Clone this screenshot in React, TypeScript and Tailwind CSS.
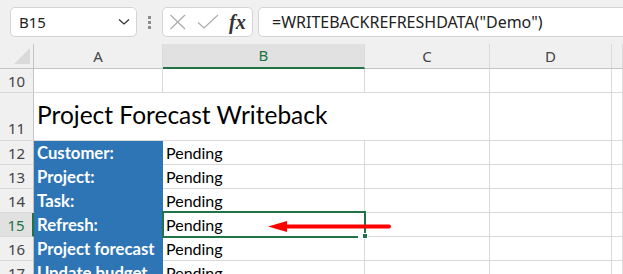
import React from "react";

const ui = "font-['Noto_Sans',sans-serif]";
const cell = "font-['Lato',sans-serif]";

function ColHeader({ label, selected }: { label: string; selected?: boolean }) {
  return (
    <div
      className={
        "flex items-center justify-center border-r border-[#dadada] text-[15px] " +
        ui +
        (selected
          ? " bg-[#e1e1e1] text-[#217346] border-b-2 border-b-[#217346]"
          : " bg-[#f0f0f0] text-[#444] border-b border-b-[#c4c4c4]")
      }
    >
      {label}
    </div>
  );
}

function RowHeader({ n, selected, bottom }: { n: number; selected?: boolean; bottom?: boolean }) {
  return (
    <div
      className={
        "flex justify-center border-b border-[#dadada] text-[15px] leading-[22px] " +
        ui +
        (bottom ? " items-end pb-[1px]" : " items-center") +
        (selected
          ? " bg-[#e1e1e1] text-[#217346] border-r-2 border-r-[#217346]"
          : " bg-[#f0f0f0] text-[#444] border-r border-r-[#c4c4c4]")
      }
    >
      {n}
    </div>
  );
}

function Empty() {
  return <div className="border-r border-b border-[#dadada] bg-white" />;
}

function Label({ text }: { text: string }) {
  return (
    <div
      className={
        "flex items-end pl-[3px] pb-[1px] bg-[#2e75b6] text-white font-bold text-[16.7px] leading-[20px] whitespace-nowrap overflow-hidden border-b border-[#2e75b6] " +
        cell
      }
    >
      {text}
    </div>
  );
}

function Value({ text }: { text: string }) {
  return (
    <div
      className={
        "flex items-end pl-[3px] pb-[1px] border-r border-b border-[#dadada] bg-white text-black text-[16px] leading-[20px] whitespace-nowrap " +
        cell
      }
    >
      {text}
    </div>
  );
}

export default function App() {
  const rows: [number, string][] = [
    [12, "Customer:"],
    [13, "Project:"],
    [14, "Task:"],
    [15, "Refresh:"],
    [16, "Project forecast"],
    [17, "Update budget"],
  ];
  return (
    <div className="relative w-[623px] h-[274px] overflow-hidden bg-white">
      {/* Toolbar */}
      <div className="flex items-start h-[44px] bg-[#f0f0f0] pt-[7px] pl-[10px]">
        <div
          className={
            "flex items-center justify-between w-[127px] h-[30px] rounded-[5px] border border-[#d4d4d4] bg-white pl-[8px] pr-[6px] text-[15px] text-[#222] " +
            ui
          }
        >
          <span>B15</span>
          <svg width="12" height="8" viewBox="0 0 12 8">
            <polyline points="1,1.5 6,6 11,1.5" fill="none" stroke="#333" strokeWidth="1.3" />
          </svg>
        </div>
        <div className="flex flex-col gap-[2px] ml-[11px] mt-[9px]">
          <div className="w-[3px] h-[3px] bg-[#8c8c8c]" />
          <div className="w-[3px] h-[3px] bg-[#8c8c8c]" />
          <div className="w-[3px] h-[3px] bg-[#8c8c8c]" />
        </div>
        <div className="flex items-center w-[91px] h-[30px] ml-[11px] rounded-[5px] border border-[#d4d4d4] bg-white pl-[6px]">
          <svg width="18" height="16" viewBox="0 0 18 16">
            <line x1="1.5" y1="1" x2="16" y2="15" stroke="#ababab" strokeWidth="1.2" />
            <line x1="16" y1="1" x2="1.5" y2="15" stroke="#ababab" strokeWidth="1.2" />
          </svg>
          <svg width="22" height="16" viewBox="0 0 22 16" className="ml-[10px]">
            <polyline points="1,8.5 7,14 21,1" fill="none" stroke="#ababab" strokeWidth="1.2" />
          </svg>
          <span className="ml-[10px] font-['Liberation_Serif',serif] italic font-bold text-[20px] leading-[20px] text-[#333]">
            fx
          </span>
        </div>
        <div
          className={
            "flex items-center flex-1 h-[30px] ml-[5px] mr-[-10px] rounded-l-[5px] border border-[#d4d4d4] bg-white pl-[13px] text-[16px] text-[#222] " +
            ui
          }
        >
          =WRITEBACKREFRESHDATA("Demo")
        </div>
      </div>

      {/* Sheet */}
      <div className="grid grid-cols-[34px_129px_202px_125px_122px_1fr] grid-rows-[25px_24px_48px_24px_24px_24px_24px_24px_24px]">
        <div className="relative bg-[#f0f0f0] border-r border-b border-[#c4c4c4]">
          <svg width="17" height="17" viewBox="0 0 17 17" className="absolute left-[14px] top-[4px]">
            <polygon points="16,0 16,16 0,16" fill="#dadada" />
          </svg>
        </div>
        <ColHeader label="A" />
        <ColHeader label="B" selected />
        <ColHeader label="C" />
        <ColHeader label="D" />
        <ColHeader label="" />

        <RowHeader n={10} />
        <Empty />
        <Empty />
        <Empty />
        <Empty />
        <Empty />

        <RowHeader n={11} bottom />
        <div
          className={
            "col-span-2 flex items-end pl-[3px] pb-[10px] border-b border-[#dadada] bg-white text-black text-[24.5px] leading-[30px] whitespace-nowrap " +
            cell
          }
        >
          Project Forecast Writeback
        </div>
        <Empty />
        <Empty />
        <Empty />

        {rows.map(([n, label]) => (
          <React.Fragment key={n}>
            <RowHeader n={n} selected={n === 15} />
            <Label text={label} />
            <Value text="Pending" />
            <Empty />
            <Empty />
            <Empty />
          </React.Fragment>
        ))}
      </div>

      {/* Selection overlay for B15 */}
      <div className="absolute left-[162px] top-[211px] w-[204px] h-[27px] border-2 border-[#217346] pointer-events-none" />
      <div className="absolute left-[358px] top-[235px] w-[4px] h-[3px] bg-white pointer-events-none" />
      <div className="absolute left-[362px] top-[233px] w-[6px] h-[6px] bg-[#217346] border border-white pointer-events-none" />

      {/* Red arrow */}
      <svg
        width="130"
        height="20"
        viewBox="0 0 130 20"
        className="absolute left-[264px] top-[217px] pointer-events-none"
      >
        <line x1="18" y1="9.5" x2="125" y2="9.5" stroke="#ff0000" strokeWidth="4" strokeLinecap="round" />
        <polygon points="4,9.5 23,4 23,15" fill="#ff0000" />
      </svg>
    </div>
  );
}
